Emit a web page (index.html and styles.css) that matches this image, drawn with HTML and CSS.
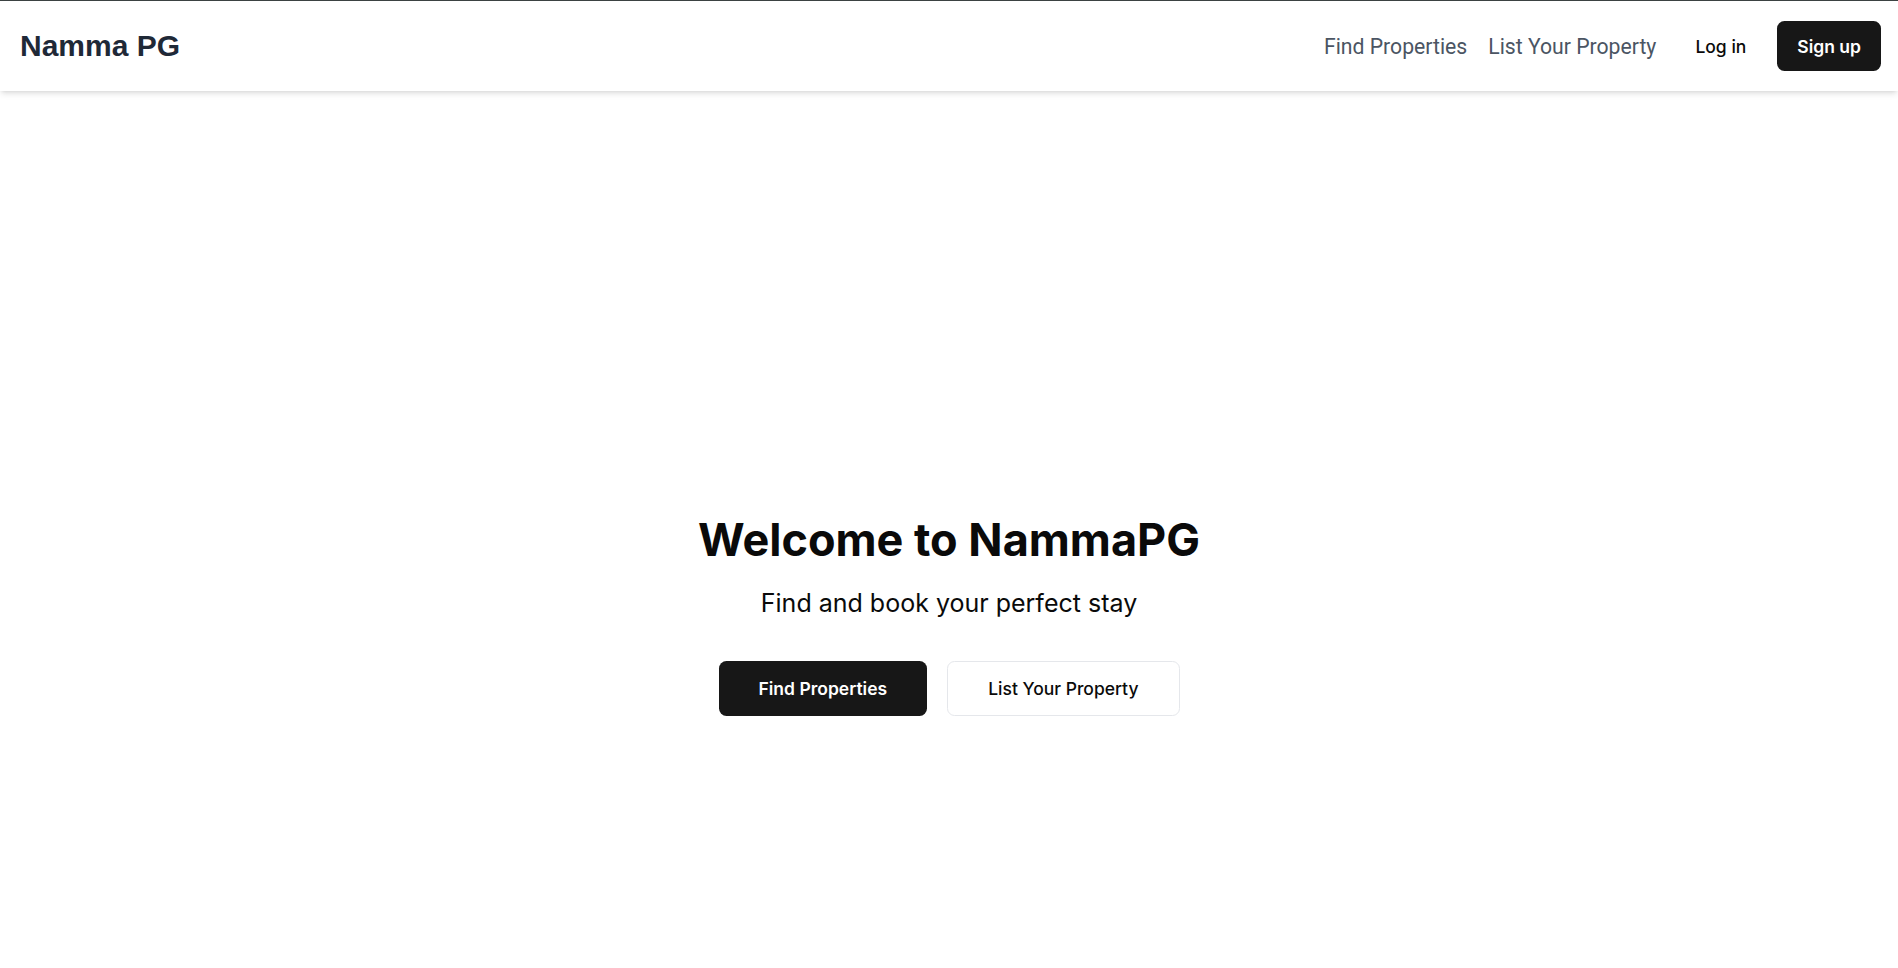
FILE: index.html
```html
<!DOCTYPE html>
<html lang="en">
<head>
<meta charset="utf-8">
<title>Namma PG</title>
<link rel="stylesheet" href="styles.css">
</head>
<body>
<header class="site-header">
  <a class="logo" href="#">Namma PG</a>
  <nav class="nav">
    <div class="nav-links">
      <a href="#" class="nav-link">Find Properties</a>
      <a href="#" class="nav-link">List Your Property</a>
    </div>
    <div class="auth">
      <a href="#" class="btn-ghost">Log in</a>
      <a href="#" class="btn-dark">Sign up</a>
    </div>
  </nav>
</header>
<main class="hero">
  <h1 class="hero-title">Welcome to NammaPG</h1>
  <p class="hero-sub">Find and book your perfect stay</p>
  <div class="hero-actions">
    <a href="#" class="cta cta-dark">Find Properties</a>
    <a href="#" class="cta cta-outline">List Your Property</a>
  </div>
</main>
</body>
</html>
```
FILE: styles.css
```css
* { box-sizing: border-box; }
html, body { margin: 0; padding: 0; background: #ffffff; }
body {
  font-family: Inter, "Noto Sans", sans-serif;
  color: #0a0a0a;
  border-top: 1px solid #3b4242;
}
a { text-decoration: none; }

.site-header {
  height: 90px;
  display: flex;
  align-items: center;
  justify-content: space-between;
  padding: 0 17px 0 20px;
  background: #fff;
  box-shadow: 0 4px 6px -1px rgba(0,0,0,0.1), 0 2px 4px -2px rgba(0,0,0,0.1);
  position: relative;
}
.logo {
  font-family: "Liberation Sans", Arial, sans-serif;
  font-weight: 700;
  font-size: 30px;
  color: #1f2937;
}
.nav { display: flex; align-items: center; gap: 19px; }
.nav-links { display: flex; align-items: center; gap: 21px; }
.nav-link {
  font-family: Roboto, sans-serif;
  font-size: 21.2px;
  color: #4b5563;
}
.auth { display: flex; align-items: center; gap: 11px; }
.btn-ghost {
  font-size: 17.5px;
  font-weight: 500;
  color: #0a0a0a;
  padding: 0 20px;
  height: 50px;
  display: inline-flex;
  align-items: center;
}
.btn-dark {
  font-size: 17.5px;
  font-weight: 600;
  color: #fff;
  background: #171717;
  border-radius: 7.5px;
  padding: 0 20px;
  height: 50px;
  display: inline-flex;
  align-items: center;
}

.hero {
  display: flex;
  flex-direction: column;
  align-items: center;
  padding-top: 424px;
}
.hero-title {
  margin: 0;
  font-size: 45px;
  font-weight: 700;
  line-height: 50px;
  color: #0a0a0a;
}
.hero-sub {
  margin: 21px 0 0;
  font-size: 25px;
  line-height: 35px;
  color: #0a0a0a;
}
.hero-actions {
  display: flex;
  gap: 20px;
  margin-top: 40px;
}
.cta {
  height: 55px;
  display: inline-flex;
  align-items: center;
  padding: 0 40px;
  font-size: 17.5px;
  border-radius: 7.5px;
}
.cta-dark { background: #171717; color: #fff; font-weight: 600; }
.cta-outline {
  background: #fff;
  color: #0a0a0a;
  font-weight: 500;
  border: 1px solid #e5e7eb;
}
```
